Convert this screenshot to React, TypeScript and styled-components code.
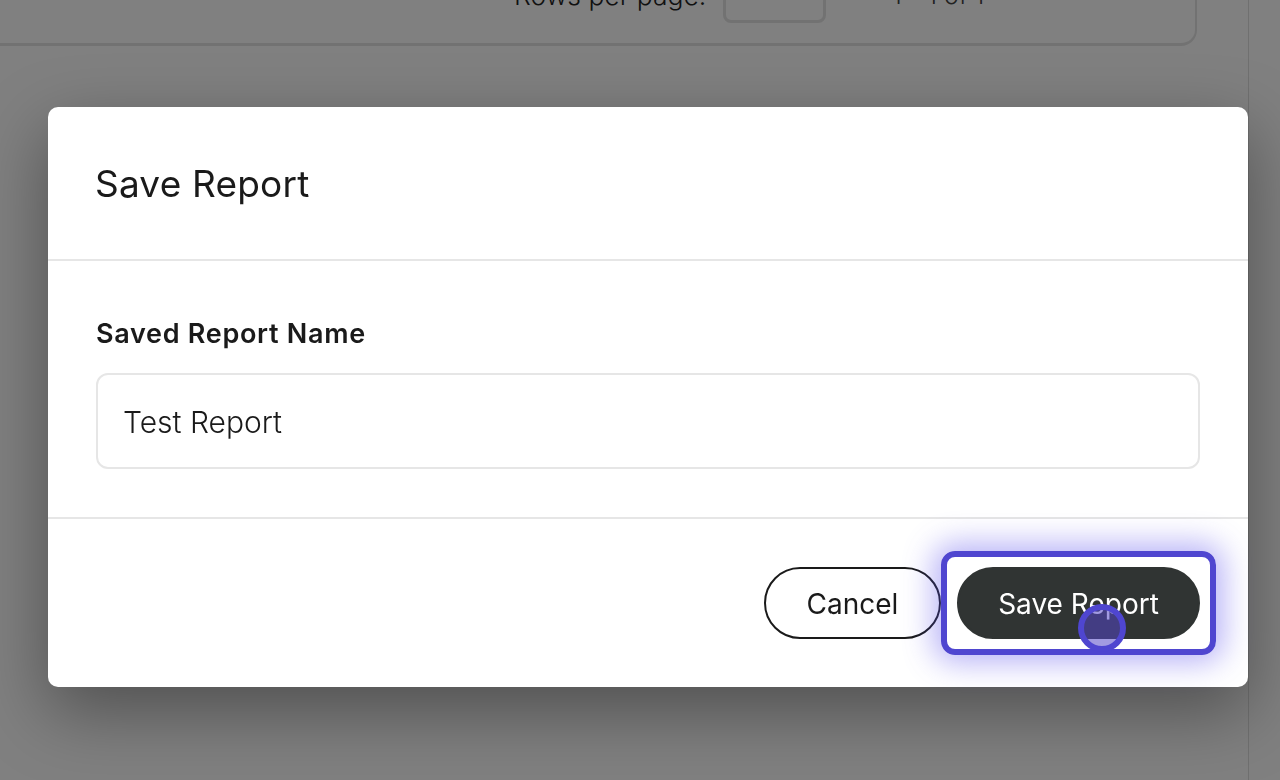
import React from "react";
import styled, { createGlobalStyle } from "styled-components";

const Global = createGlobalStyle`
  html, body { margin: 0; padding: 0; height: 100%; overflow: hidden; background: #808080; }
  * { box-sizing: border-box; }
`;

const FONT = `"Open Sans", "Noto Sans", "Liberation Sans", sans-serif`;

const Page = styled.div`
  width: 1280px;
  height: 780px;
  display: flex;
  overflow: hidden;
  background: #808080;
  font-family: Inter, ${FONT};
`;

const Main = styled.div`
  width: 1249px;
  height: 780px;
  border-right: 1px solid #707070;
  padding-right: 51px;
`;

const TableCard = styled.div`
  height: 46px;
  border-right: 2px solid #727272;
  border-bottom: 3px solid #727272;
  border-bottom-right-radius: 16px;
  display: flex;
  justify-content: flex-end;
  align-items: flex-start;
`;

const Pager = styled.div`
  display: flex;
  align-items: flex-start;
  margin-top: -20px;
  color: #111;
  font-size: 26.5px;
  line-height: 30px;
  font-weight: 300;
  white-space: nowrap;
`;

const RowsLabel = styled.span`
  width: 209px;
`;

const RowsSelect = styled.div`
  width: 103px;
  height: 43px;
  border: 3px solid #727272;
  border-radius: 8px;
  display: flex;
  justify-content: center;
  padding-top: 9px;
`;

const Chevron = styled.svg`
  width: 12px;
  height: 8px;
  color: #6c6c6c;
`;

const Range = styled.span`
  margin-left: 66px;
  width: 94px;
  color: #222;
  font-size: 25px;
`;

const PagerIcons = styled.div`
  width: 209px;
  display: flex;
  gap: 56px;
  padding: 11px 0 0 68px;
`;

const Overlay = styled.div`
  position: fixed;
  inset: 0;
  padding: 107px 32px 0 48px;
`;

const Modal = styled.div`
  position: relative;
  width: 1200px;
  height: 580px;
  background: #fff;
  border-radius: 10px;
  box-shadow: 0 24px 70px rgba(0, 0, 0, 0.38);
  display: flex;
  flex-direction: column;
  color: #1a1a1a;
  font-family: ${FONT};
`;

const Header = styled.div`
  height: 154px;
  padding: 50px 47px 0;
  border-bottom: 2px solid #e6e6e6;
`;

const Title = styled.h2`
  margin: 0;
  font-family: Inter, ${FONT};
  font-size: 37px;
  line-height: 54px;
  font-weight: 400;
  letter-spacing: 0.2px;
`;

const Body = styled.div`
  height: 258px;
  padding: 53px 48px 0;
  border-bottom: 2px solid #e6e6e6;
`;

const Label = styled.label`
  display: block;
  font-family: Inter, ${FONT};
  font-size: 27px;
  line-height: 40px;
  font-weight: 600;
  letter-spacing: 0.7px;
`;

const NameInput = styled.div`
  margin-top: 19px;
  width: 1104px;
  height: 96px;
  border: 2px solid #e6e6e6;
  border-radius: 12px;
  padding: 2px 25px 0;
  display: flex;
  align-items: center;
  font-family: Inter, ${FONT};
  font-size: 30px;
  font-weight: 300;
`;

const Footer = styled.div`
  flex: 1;
  display: flex;
  justify-content: flex-end;
  align-items: flex-start;
  gap: 16px;
  padding: 48px 48px 0 0;
`;

const PillButton = styled.button<{ $primary?: boolean }>`
  height: 72px;
  width: ${(p) => (p.$primary ? "243px" : "177px")};
  border-radius: 36px;
  border: 2px solid ${(p) => (p.$primary ? "#303433" : "#1a1a1a")};
  background: ${(p) => (p.$primary ? "#303433" : "#fff")};
  color: ${(p) => (p.$primary ? "#fff" : "#1a1a1a")};
  font-family: Inter, ${FONT};
  font-size: 28px;
  font-weight: 400;
  padding: 2px 0 0;
`;

const Highlight = styled.div`
  position: absolute;
  left: 893px;
  top: 444px;
  width: 275px;
  height: 104px;
  border: 6px solid #4f46d0;
  border-radius: 14px;
  box-shadow: 0 0 30px 8px rgba(88, 76, 235, 0.42);
  pointer-events: none;
`;

const CursorRing = styled.div`
  position: absolute;
  left: 1030px;
  top: 497px;
  width: 48px;
  height: 48px;
  border: 6px solid #4f46d0;
  border-radius: 50%;
  background: rgba(83, 70, 200, 0.54);
  pointer-events: none;
`;

function Down() {
  return (
    <Chevron viewBox="0 0 12 8" fill="none" stroke="currentColor" strokeWidth="2">
      <path d="M1 1l5 5 5-5" />
    </Chevron>
  );
}

export default function App() {
  return (
    <>
      <Global />
      <Page>
        <Main>
          <TableCard>
            <Pager>
              <RowsLabel>Rows per page:</RowsLabel>
              <RowsSelect>
                <Down />
              </RowsSelect>
              <Range>1 - 1 of 1</Range>
              <PagerIcons>
                <Down />
                <Down />
              </PagerIcons>
            </Pager>
          </TableCard>
        </Main>
        <Overlay>
          <Modal>
            <Header>
              <Title>Save Report</Title>
            </Header>
            <Body>
              <Label>Saved Report Name</Label>
              <NameInput>Test Report</NameInput>
            </Body>
            <Footer>
              <PillButton>Cancel</PillButton>
              <PillButton $primary>Save Report</PillButton>
            </Footer>
            <Highlight />
            <CursorRing />
          </Modal>
        </Overlay>
      </Page>
    </>
  );
}
